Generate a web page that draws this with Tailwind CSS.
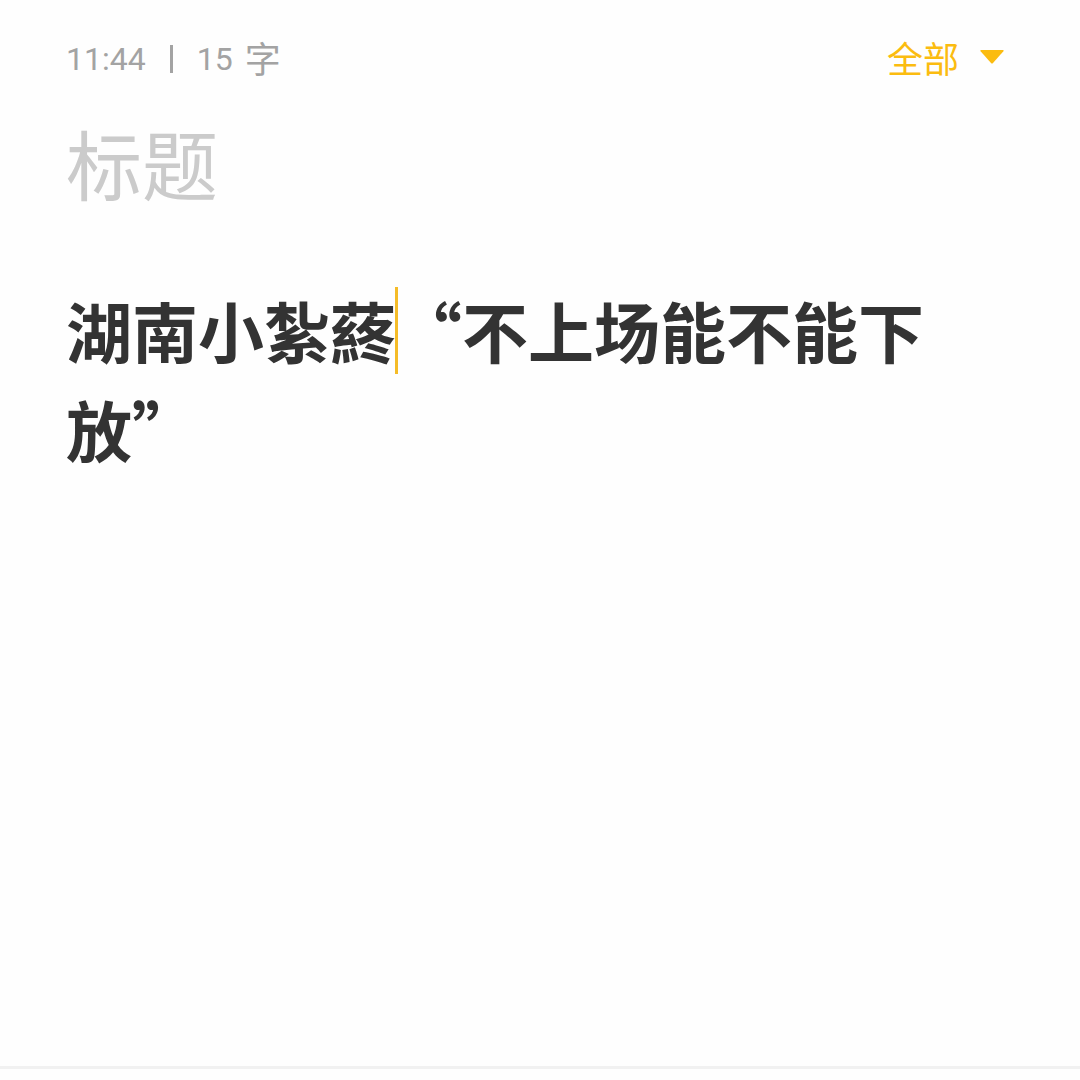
<!DOCTYPE html>
<html lang="zh-CN">
<head>
    <meta charset="UTF-8">
    <meta name="viewport" content="width=device-width, initial-scale=1.0">
    <title>笔记</title>
    <script src="https://cdn.jsdelivr.net/npm/@tailwindcss/browser@4"></script>
</head>
<body class="flex min-h-screen flex-col bg-[#fefefe] font-['Noto_Sans_CJK_SC',sans-serif]">
    <header class="flex items-center justify-between pt-[30px] pr-[76px] pl-[66px] text-[36px] leading-[54px]">
        <div class="flex items-center text-[#a3a3a3]">
            <time class="font-[Roboto,sans-serif] text-[32px]">11:44</time>
            <span class="mx-6 h-7 w-[3px] bg-[#a3a3a3]"></span>
            <span class="font-[Roboto,sans-serif] text-[32px]">15</span>
            <span class="ml-3 pb-1">字</span>
        </div>
        <label class="flex items-center gap-5 pb-1 text-[#fbbc10]">
            <select aria-label="分类" class="appearance-none outline-none">
                <option>全部</option>
            </select>
            <svg class="h-4 w-6" viewBox="0 0 24 16" fill="currentColor">
                <path d="M1.2 1h21.6q1.6 0 .6 1.2L13 13.9q-1 1-2 0L.6 2.2Q-.4 1 1.2 1z"/>
            </svg>
        </label>
    </header>

    <main class="flex grow flex-col px-[66px]">
        <input type="text" aria-label="标题" placeholder="标题" class="mt-[18px] w-full text-[76px] leading-[112px] outline-none placeholder:text-[#cbcbcb]">
        <div class="relative mt-[62px] flex grow flex-col">
            <textarea aria-label="正文" class="w-full grow resize-none overflow-hidden text-[66px] leading-[99px] font-bold text-[#333] outline-none">湖南小紮蔠“不上场能不能下放”</textarea>
            <!-- cursor -->
            <span class="absolute top-[7px] left-[329px] h-[87px] w-[3px] bg-[#f5bc28]"></span>
        </div>
    </main>

    <footer class="h-[14px] border-t-3 border-[#f1f1f1]"></footer>
</body>
</html>
